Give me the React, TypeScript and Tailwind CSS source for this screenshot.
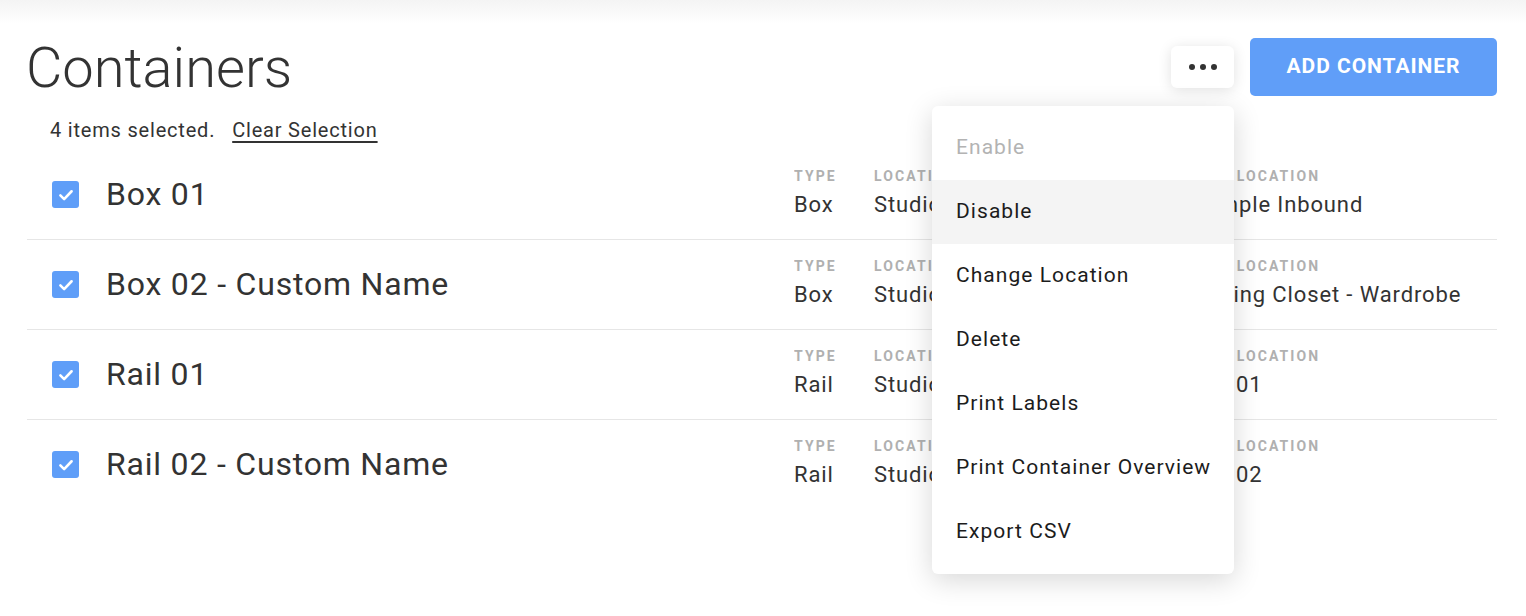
import React from "react";

const rows = [
  { name: "Box 01", type: "Box", loc: "Studio A", status: "Active", sub: "Sample Inbound" },
  { name: "Box 02 - Custom Name", type: "Box", loc: "Studio A", status: "Active", sub: "Dressing Closet - Wardrobe" },
  { name: "Rail 01", type: "Rail", loc: "Studio A", status: "Active", sub: "Rail 01" },
  { name: "Rail 02 - Custom Name", type: "Rail", loc: "Studio A", status: "Active", sub: "Rail 02" },
];

const offs = ["-ml-[6px]", "-ml-[25px]", "-ml-[8px]", "-ml-[8px]"];

const menu = [
  { label: "Enable", disabled: true },
  { label: "Disable", active: true },
  { label: "Change Location" },
  { label: "Delete" },
  { label: "Print Labels" },
  { label: "Print Container Overview" },
  { label: "Export CSV" },
];

function Checkbox() {
  return (
    <div className="w-[27px] h-[27px] rounded-[3px] bg-[#5f9ef8] flex items-center justify-center shrink-0">
      <svg width="18" height="18" viewBox="0 0 24 24" fill="none">
        <path d="M4.5 12.5l5 5L19.5 7" stroke="white" strokeWidth="3.4" strokeLinecap="round" strokeLinejoin="round" />
      </svg>
    </div>
  );
}

function Col({ w, label, value, off }: { w: string; label: string; value: string; off?: string }) {
  return (
    <div className={`${w} shrink-0 self-start pt-[18px] overflow-hidden whitespace-nowrap`}>
      <div className="text-[14px] leading-[16px] font-bold tracking-[0.15em] text-[#b0b0b0]">{label}</div>
      <div className={`text-[22px] leading-[24px] mt-[9px] text-[#333] tracking-[0.04em] ${off ?? ""}`}>{value}</div>
    </div>
  );
}

export default function App() {
  return (
    <div className="min-h-[616px] bg-white" style={{ fontFamily: "Roboto, 'Noto Sans', sans-serif" }}>
      <div className="h-[24px] bg-gradient-to-b from-[#f4f4f4] to-white" />
      <div className="px-[27px] pr-[29px]">
        <div className="flex items-start justify-between pt-[14px]">
          <h1 className="text-[56px] leading-[60px] font-light text-[#333] -ml-[1px]">Containers</h1>
          <div className="flex items-start gap-[16px]">
            <div className="relative mt-[8px]">
              <button className="w-[63px] h-[42px] rounded-[6px] bg-white shadow-[0_2px_14px_rgba(0,0,0,0.12)] flex items-center justify-center gap-[5px]">
                <span className="w-[6px] h-[6px] rounded-full bg-[#333]" />
                <span className="w-[6px] h-[6px] rounded-full bg-[#333]" />
                <span className="w-[6px] h-[6px] rounded-full bg-[#333]" />
              </button>
              <div className="absolute right-0 top-[60px] w-[302px] bg-white rounded-[6px] shadow-[0_6px_28px_rgba(0,0,0,0.16)] py-[10px] z-10">
                {menu.map((m) => (
                  <div
                    key={m.label}
                    className={`h-[64px] flex items-center pl-[24px] text-[21px] tracking-[0.05em] whitespace-nowrap ${
                      m.disabled ? "text-[#b3b3b3]" : "text-[#1c1c1c]"
                    } ${m.active ? "bg-[#f4f4f4]" : ""}`}
                  >
                    {m.label}
                  </div>
                ))}
              </div>
            </div>
            <button className="w-[247px] h-[58px] rounded-[5px] bg-[#609ef8] text-white text-[21px] font-bold tracking-[0.045em]">
              ADD CONTAINER
            </button>
          </div>
        </div>

        <div className="mt-[17px] h-[30px] flex items-center pl-[23px] text-[20px] text-[#333] tracking-[0.04em]">
          <span>4 items selected.</span>
          <span className="ml-[17px] underline underline-offset-[4px]">Clear Selection</span>
        </div>

        <div className="mt-[5px]">
          {rows.map((r, i) => (
            <div
              key={r.name}
              className={`flex items-center ${i < rows.length - 1 ? "border-b border-[#e6e6e6] h-[90px]" : "h-[89px]"}`}
            >
              <div className="pl-[25px]">
                <Checkbox />
              </div>
              <div className="ml-[27px] flex-1 text-[32px] text-[#333] tracking-[0.025em] whitespace-nowrap -mt-[2px]">
                {r.name}
              </div>
              <Col w="w-[80px]" label="TYPE" value={r.type} />
              <Col w="w-[180px]" label="LOCATION" value={r.loc} />
              <Col w="w-[144px]" label="STATUS" value={r.status} />
              <Col w="w-[299px]" label="SUB LOCATION" value={r.sub} off={offs[i]} />
            </div>
          ))}
        </div>
      </div>
    </div>
  );
}
